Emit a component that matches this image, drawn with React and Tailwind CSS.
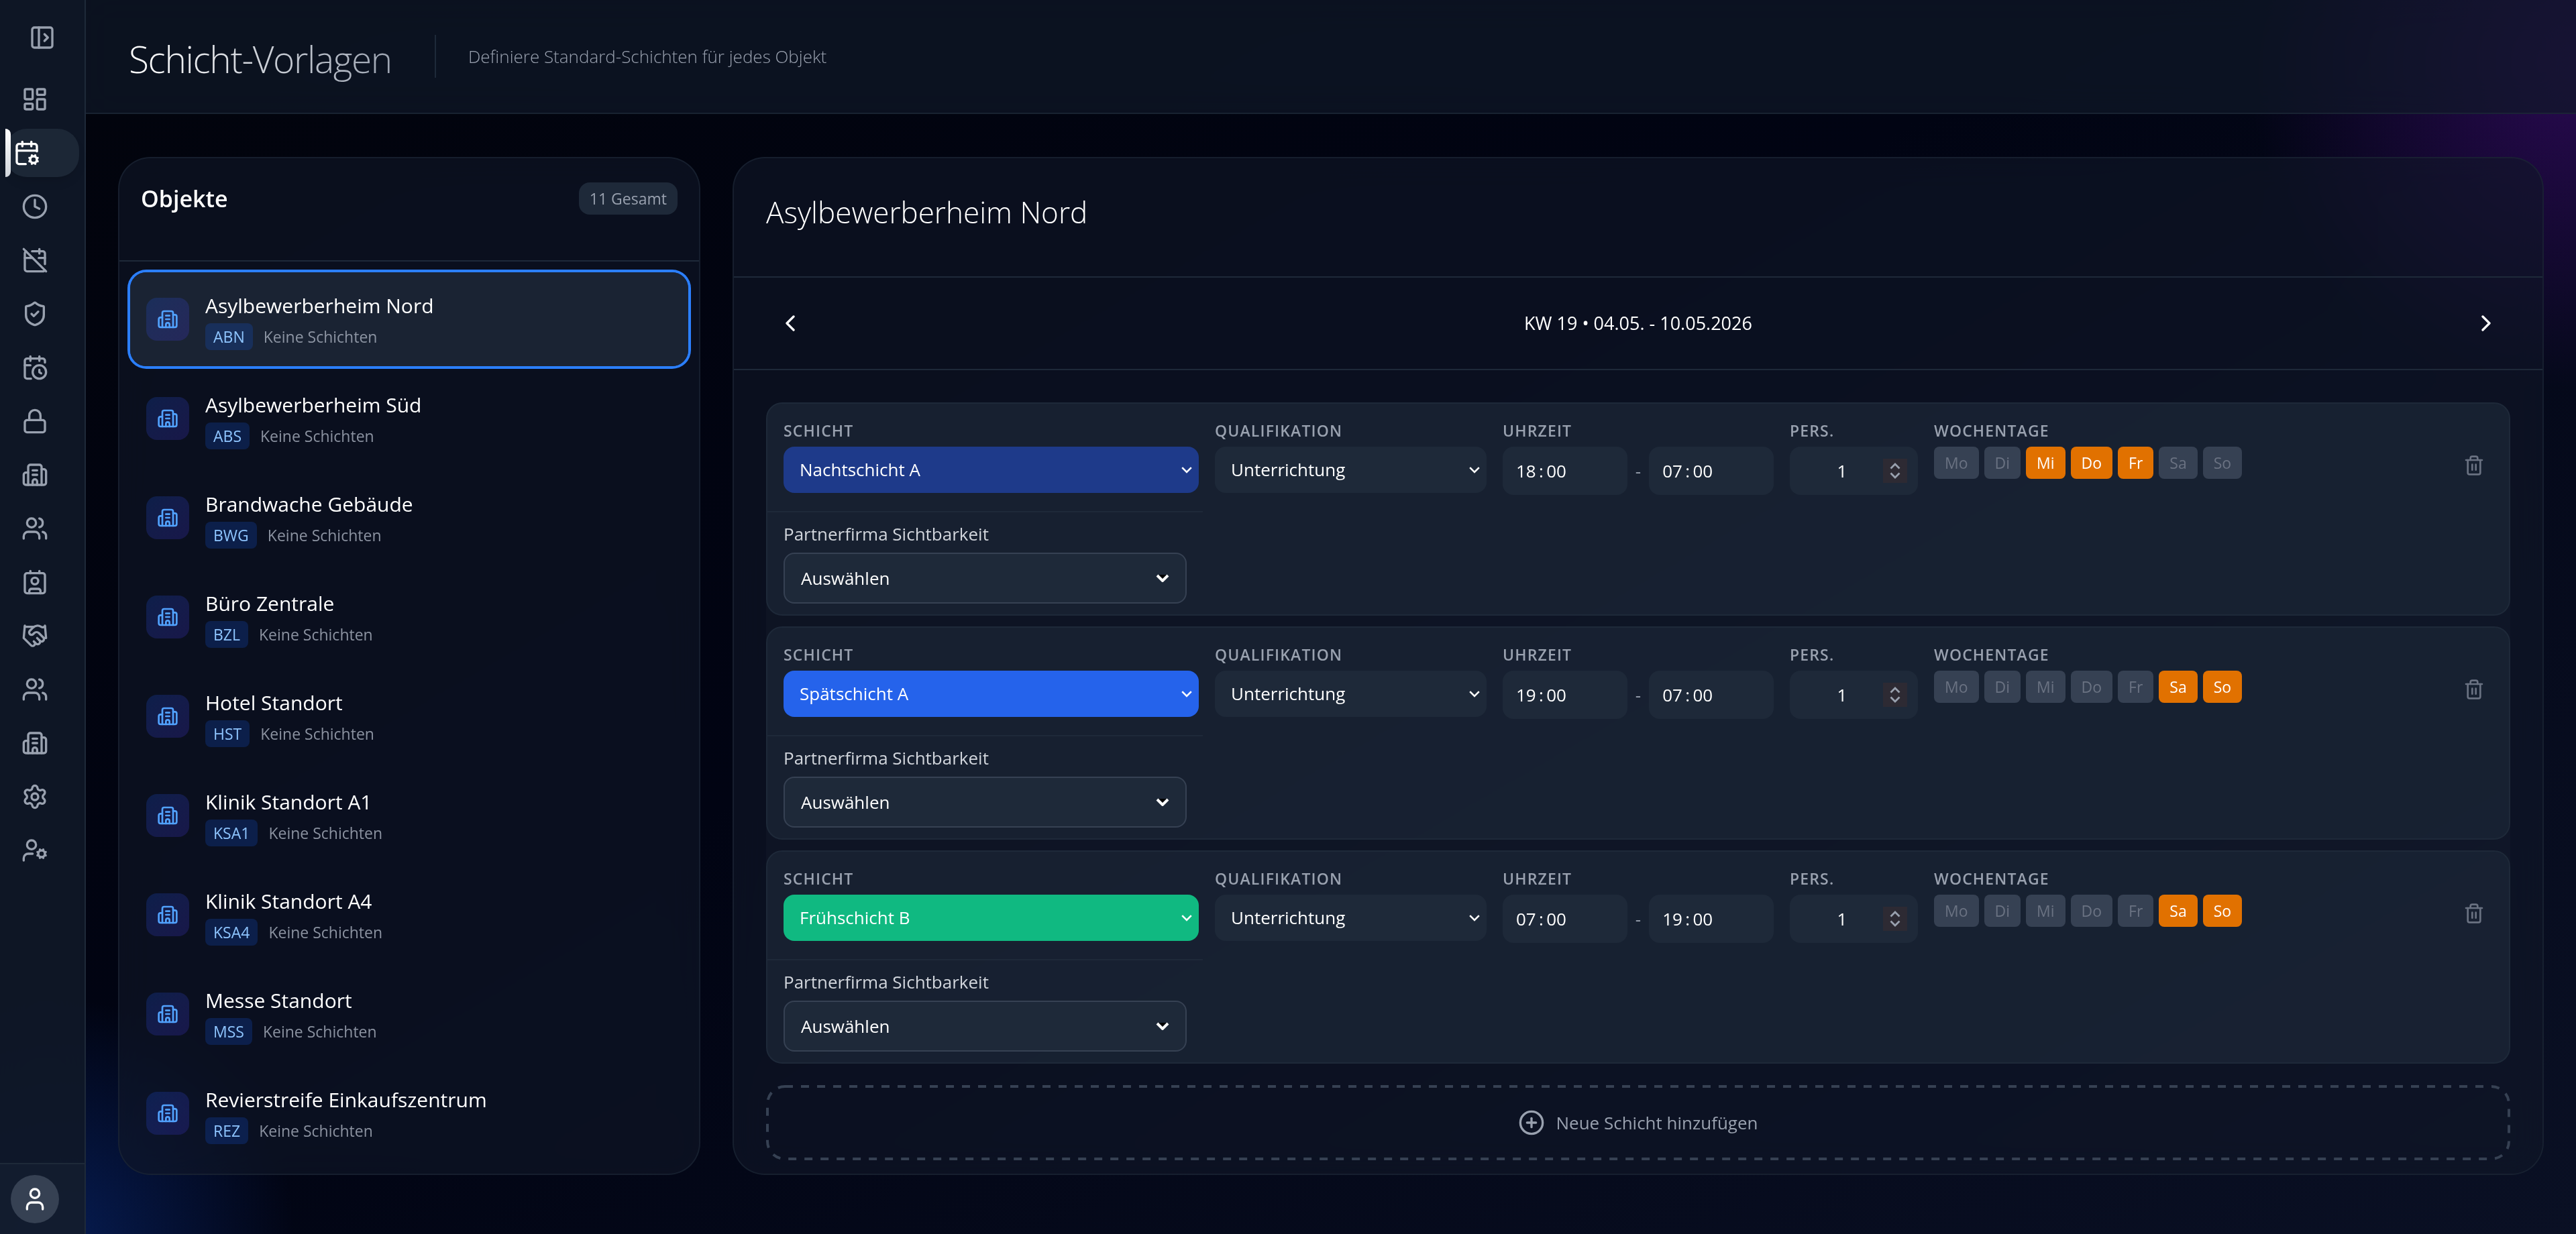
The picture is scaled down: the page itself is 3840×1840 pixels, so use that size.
import React from "react";
import {
  Building2,
  CalendarClock,
  CalendarCog,
  CalendarOff,
  ChevronLeft,
  ChevronRight,
  CirclePlus,
  Clock,
  Contact,
  Handshake,
  LayoutDashboard,
  Lock,
  PanelLeftOpen,
  Settings,
  ShieldCheck,
  Trash2,
  User,
  UserCog,
  Users,
} from "lucide-react";

const NAV = [
  { label: "Dashboard", icon: LayoutDashboard },
  { label: "Schicht-Vorlagen", icon: CalendarCog, active: true },
  { label: "Zeiterfassung", icon: Clock },
  { label: "Abwesenheiten", icon: CalendarOff },
  { label: "Sicherheit", icon: ShieldCheck },
  { label: "Dienstplan", icon: CalendarClock },
  { label: "Sperren", icon: Lock },
  { label: "Objekte", icon: Building2 },
  { label: "Mitarbeiter", icon: Users },
  { label: "Ausweise", icon: Contact },
  { label: "Partner", icon: Handshake },
  { label: "Teams", icon: Users },
  { label: "Standorte", icon: Building2 },
  { label: "Einstellungen", icon: Settings },
  { label: "Benutzerverwaltung", icon: UserCog },
];

const OBJECTS = [
  { name: "Asylbewerberheim Nord", code: "ABN", active: true },
  { name: "Asylbewerberheim Süd", code: "ABS" },
  { name: "Brandwache Gebäude", code: "BWG" },
  { name: "Büro Zentrale", code: "BZL" },
  { name: "Hotel Standort", code: "HST" },
  { name: "Klinik Standort A1", code: "KSA1" },
  { name: "Klinik Standort A4", code: "KSA4" },
  { name: "Messe Standort", code: "MSS" },
  { name: "Revierstreife Einkaufszentrum", code: "REZ" },
];

const DAYS = ["Mo", "Di", "Mi", "Do", "Fr", "Sa", "So"];

const SHIFTS = [
  { id: 1, name: "Nachtschicht A", color: "bg-[#1e3a8a]", from: "18\u2009:\u200900", to: "07\u2009:\u200900", days: ["Mi", "Do", "Fr"] },
  { id: 2, name: "Spätschicht A", color: "bg-[#2563eb]", from: "19\u2009:\u200900", to: "07\u2009:\u200900", days: ["Sa", "So"] },
  { id: 3, name: "Frühschicht B", color: "bg-[#10b981]", from: "07\u2009:\u200900", to: "19\u2009:\u200900", days: ["Sa", "So"] },
];

function Sidebar() {
  return (
    <aside className="flex w-32 shrink-0 flex-col border-r-2 border-gray-800 bg-gray-900/90 backdrop-blur-xl">
      <div className="flex h-28 items-center justify-center">
        <button type="button" aria-label="Menü öffnen" className="text-gray-400">
          <PanelLeftOpen size={40} />
        </button>
      </div>
      <nav className="flex flex-1 flex-col gap-2 px-2">
        {NAV.map(({ label, icon: Icon, active }) => (
          <a
            key={label}
            href="#"
            aria-label={label}
            className={
              active
                ? "relative flex h-[72px] items-center rounded-[32px] bg-gray-800/90 pl-3 text-white shadow-lg"
                : "flex h-[72px] items-center pl-6 text-gray-400"
            }
          >
            {active && (
              <span className="absolute inset-y-0 left-0 w-2 rounded-r-lg bg-gradient-to-b from-white to-gray-300" />
            )}
            <Icon size={40} />
          </a>
        ))}
      </nav>
      <div className="border-t-2 border-gray-800 bg-gray-800/30 p-4">
        <button
          type="button"
          aria-label="Profil"
          className="flex size-[72px] items-center justify-center rounded-full bg-gray-700 text-white"
        >
          <User size={40} />
        </button>
      </div>
    </aside>
  );
}

function ObjectList() {
  return (
    <section className="col-span-3 flex min-h-0 flex-col overflow-hidden rounded-[48px] border-2 border-gray-800/60 bg-gray-900/60 backdrop-blur-xl">
      <div className="border-b-2 border-gray-800 p-8">
        <div className="mb-8 flex h-14 items-center justify-between">
          <h2 className="text-[34px] font-semibold text-white">Objekte</h2>
          <span className="rounded-2xl bg-gray-800 px-4 py-2 text-[23px] leading-8 text-gray-400">11 Gesamt</span>
        </div>
      </div>
      <ul className="flex flex-1 flex-col gap-2 overflow-y-auto p-4 [scrollbar-width:none]">
        {OBJECTS.map((o) => (
          <li key={o.code}>
            <button
              type="button"
              className={
                o.active
                  ? "flex w-full items-center gap-6 rounded-3xl bg-gray-800/80 p-6 text-left ring-4 ring-[#2b7fff]"
                  : "flex w-full items-center gap-6 rounded-3xl p-6 text-left"
              }
            >
              <span className="flex size-16 shrink-0 items-center justify-center rounded-2xl bg-gradient-to-br from-blue-600/20 to-indigo-600/20 text-blue-400">
                <Building2 size={32} />
              </span>
              <span className="flex min-w-0 flex-col">
                <span className="truncate text-[30px] leading-[52px] text-white">{o.name}</span>
                <span className="flex items-center gap-4">
                  <span className="rounded-lg bg-blue-600/20 px-3 py-1 text-[23px] leading-8 text-blue-300">{o.code}</span>
                  <span className="text-[23px] leading-8 text-gray-400/90">Keine Schichten</span>
                </span>
              </span>
            </button>
          </li>
        ))}
      </ul>
    </section>
  );
}

function Label({ htmlFor, children }) {
  return (
    <label htmlFor={htmlFor} className="mb-2 block text-[23px] leading-8 font-semibold tracking-wider text-gray-400 uppercase">
      {children}
    </label>
  );
}

function SelectArrow() {
  return (
    <svg viewBox="0 0 16 10" className="pointer-events-none absolute top-1/2 right-[10px] h-[10px] w-4 -translate-y-1/2" fill="none" stroke="white" strokeWidth="2.600">
      <path d="M1.200 1.200 8 8l6.800-6.800" />
    </svg>
  );
}

function ShiftCard({ shift }) {
  const id = "s" + shift.id;
  return (
    <article className="rounded-3xl border-2 border-gray-800 bg-gray-800/60">
      <div className="grid grid-cols-[619fr_405fr_404fr_191fr_753fr_auto] gap-6 p-6">
        <div>
          <Label htmlFor={id + "-name"}>Schicht</Label>
          <div className="relative">
            <select id={id + "-name"} className={"h-[69px] w-full appearance-none rounded-2xl px-6 text-[26px] text-white " + shift.color}>
              <option>{shift.name}</option>
            </select>
            <SelectArrow />
          </div>
        </div>
        <div>
          <Label htmlFor={id + "-quali"}>Qualifikation</Label>
          <div className="relative">
            <select id={id + "-quali"} className="h-[69px] w-full appearance-none rounded-2xl bg-gray-800 px-6 text-[26px] text-white">
              <option>Unterrichtung</option>
            </select>
            <SelectArrow />
          </div>
        </div>
        <div>
          <Label htmlFor={id + "-from"}>Uhrzeit</Label>
          <div className="flex items-center gap-3">
            <input id={id + "-from"} type="text" defaultValue={shift.from} className="h-[72px] w-full min-w-0 rounded-2xl bg-gray-800 px-5 text-[26px] text-white" />
            <span className="text-[26px] text-gray-400">-</span>
            <input aria-label="Uhrzeit bis" type="text" defaultValue={shift.to} className="h-[72px] w-full min-w-0 rounded-2xl bg-gray-800 px-5 text-[26px] text-white" />
          </div>
        </div>
        <div>
          <Label htmlFor={id + "-pers"}>Pers.</Label>
          <div className="relative">
            <input
              id={id + "-pers"}
              type="number"
              defaultValue={1}
              className="h-[72px] w-full [appearance:textfield] rounded-2xl bg-gray-800 pr-[52px] pl-8 text-center text-[26px] text-white"
            />
            <span className="pointer-events-none absolute top-1/2 right-4 flex size-9 -translate-y-1/2 items-center justify-center bg-[#2d2a33] text-gray-400">
              <svg viewBox="0 0 16 24" className="h-6 w-4" fill="none" stroke="currentColor" strokeWidth="2.800">
                <path d="M1.500 8.500 8 2l6.500 6.500M1.500 15.500 8 22l6.500-6.500" />
              </svg>
            </span>
          </div>
        </div>
        <fieldset>
          <legend className="mb-2 block text-[23px] leading-8 font-semibold tracking-wider text-gray-400 uppercase">Wochentage</legend>
          <div className="flex gap-2">
            {DAYS.map((d) => (
              <button
                key={d}
                type="button"
                aria-pressed={shift.days.includes(d)}
                className={
                  shift.days.includes(d)
                    ? "rounded-lg bg-[#e17100] px-4 py-2 text-[23px] leading-8 text-white"
                    : "rounded-lg bg-gray-700 px-4 py-2 text-[23px] leading-8 text-gray-500"
                }
              >
                {d}
              </button>
            ))}
          </div>
        </fieldset>
        <button type="button" aria-label="Schicht löschen" className="mt-10 self-start p-3 text-gray-500">
          <Trash2 size={32} />
        </button>
      </div>
      <div className="w-1/4 border-t-2 border-gray-800 px-6 pt-3 pb-4">
        <label htmlFor={id + "-partner"} className="mb-2 block text-[26px] leading-10 text-gray-300">
          Partnerfirma Sichtbarkeit
        </label>
        <div className="relative">
          <select id={id + "-partner"} className="h-[76px] w-full appearance-none rounded-2xl border-2 border-gray-700 bg-gray-800 px-6 text-[26px] text-white">
            <option>Auswählen</option>
          </select>
          <svg viewBox="0 0 20 12" className="pointer-events-none absolute top-1/2 right-[26px] h-3 w-5 -translate-y-1/2" fill="none" stroke="white" strokeWidth="4">
            <path d="M4 1h12l-6 6z" fill="black" stroke="none" />
            <path d="M2 2l8 8 8-8" />
          </svg>
        </div>
      </div>
    </article>
  );
}

function Detail() {
  return (
    <section className="col-span-9 flex min-h-0 flex-col overflow-hidden rounded-[48px] border-2 border-gray-800/60 bg-gray-900/60 backdrop-blur-xl">
      <div className="border-b-2 border-gray-800 px-12 pt-12 pb-16">
        <h2 className="text-[44px] leading-[64px] font-light text-white">Asylbewerberheim Nord</h2>
      </div>
      <div className="flex items-center justify-between border-b-2 border-gray-800 px-12 py-8 text-white">
        <button type="button" aria-label="Vorherige Woche" className="p-4">
          <ChevronLeft size={40} />
        </button>
        <span className="text-[27px]">KW 19 • 04.05. - 10.05.2026</span>
        <button type="button" aria-label="Nächste Woche" className="p-4">
          <ChevronRight size={40} />
        </button>
      </div>
      <div className="flex-1 overflow-y-auto p-12 [scrollbar-width:none]">
        <div className="mb-8 flex flex-col gap-4 rounded-3xl bg-gray-800/20">
          {SHIFTS.map((s) => (
            <ShiftCard key={s.id} shift={s} />
          ))}
        </div>
        <button
          type="button"
          className="relative flex h-28 w-full items-center justify-center gap-4 rounded-[28px] text-[26px] text-gray-400"
        >
          <svg aria-hidden="true" className="absolute inset-0 size-full p-[2px] text-gray-700 overflow-visible" fill="none">
            <rect width="100%" height="100%" rx="26" stroke="currentColor" strokeWidth="4" strokeDasharray="12 12" />
          </svg>
          <CirclePlus size={40} />
          Neue Schicht hinzufügen
        </button>
      </div>
    </section>
  );
}

export default function App() {
  return (
    <div className="flex h-screen overflow-hidden bg-[#010413] bg-[radial-gradient(circle_490px_at_100%_90px,rgba(152,16,250,0.26),rgba(152,16,250,0.13)_50%,transparent),radial-gradient(circle_350px_at_90px_100%,rgba(21,93,252,0.26),rgba(21,93,252,0.13)_50%,transparent),linear-gradient(150deg,#02040c,#010413_45%,#0a1024)] font-['Segoe_UI','Open_Sans',sans-serif]">
      <Sidebar />
      <div className="flex min-w-0 flex-1 flex-col">
        <header className="flex h-[170px] shrink-0 items-center gap-12 border-b-2 border-gray-800/70 bg-gray-900/70 px-16 backdrop-blur-xl">
          <h1 className="bg-gradient-to-r from-white to-gray-400 bg-clip-text pt-2 pr-4 text-[55px] leading-[72px] font-light tracking-tight text-transparent">
            Schicht-Vorlagen
          </h1>
          <div className="h-16 w-[2px] bg-gray-800" />
          <p className="text-[26px] font-light text-gray-400">Definiere Standard-Schichten für jedes Objekt</p>
        </header>
        <main className="grid min-h-0 flex-1 grid-cols-12 grid-rows-1 gap-12 px-12 pt-16 pb-[88px]">
          <ObjectList />
          <Detail />
        </main>
      </div>
    </div>
  );
}
